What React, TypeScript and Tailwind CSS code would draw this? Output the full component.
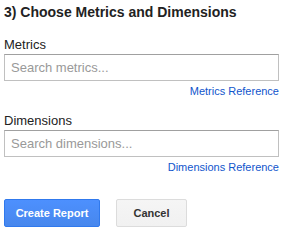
import React from 'react'

const Field: React.FC<{ label: string; placeholder: string; link: string }> = ({
  label,
  placeholder,
  link,
}) => {
  return (
    <div className="flex flex-col">
      <label className="text-[13px] leading-[15px] text-[#222]">{label}</label>
      <input
        type="text"
        placeholder={placeholder}
        className="mt-[2px] h-[27px] w-full border border-[#c0c0c0] border-t-[#a0a0a0] bg-white px-[6px] text-[13px] text-[#333] outline-none placeholder:text-[#999]"
      />
      <a href="#" className="mt-[4px] self-end text-[11px] leading-[13px] text-[#1155cc]">
        {link}
      </a>
    </div>
  )
}

const App: React.FC = () => {
  return (
    <div className="h-[243px] w-[286px] bg-white px-[4px] pt-[4px] font-['Liberation_Sans',Arial,sans-serif] text-[#222]">
      <h1 className="text-[14px] font-bold leading-[17px] text-[#222]">
        3) Choose Metrics and Dimensions
      </h1>
      <div className="mt-[16px] w-[275px]">
        <Field label="Metrics" placeholder="Search metrics..." link="Metrics Reference" />
        <div className="mt-[15px]">
          <Field label="Dimensions" placeholder="Search dimensions..." link="Dimensions Reference" />
        </div>
      </div>
      <div className="mt-[25px] flex gap-[16px]">
        <button className="h-[28px] w-[96px] rounded-[2px] border border-[#3079ed] bg-gradient-to-b from-[#4d90fe] to-[#4787ed] text-[11px] font-bold text-white">
          Create Report
        </button>
        <button className="h-[28px] w-[71px] rounded-[2px] border border-[#dcdcdc] bg-gradient-to-b from-[#f5f5f5] to-[#f1f1f1] text-[11px] font-bold text-[#333]">
          Cancel
        </button>
      </div>
    </div>
  )
}

export default App
